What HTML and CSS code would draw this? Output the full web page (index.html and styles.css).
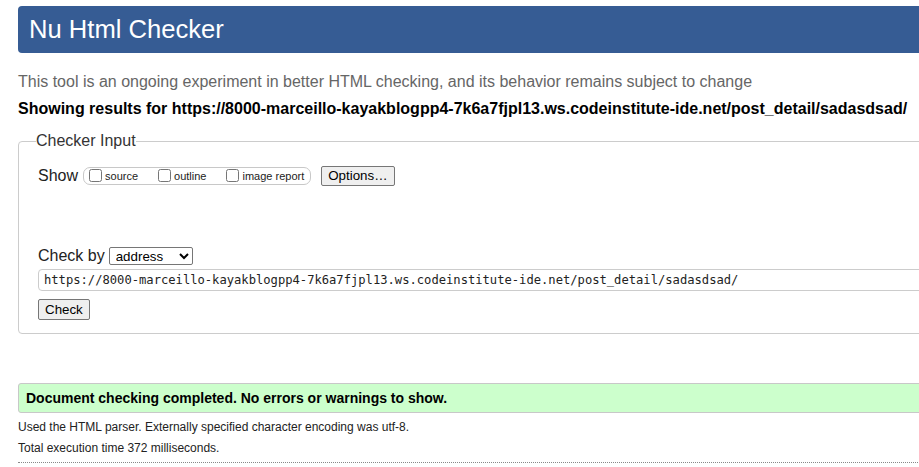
FILE: index.html
```html
<!DOCTYPE html>
<html lang="en">
<head>
<meta charset="utf-8">
<title>Nu Html Checker</title>
<link rel="stylesheet" href="styles.css">
</head>
<body>
<div class="page">
  <h1 class="banner">Nu Html Checker</h1>
  <p class="intro">This tool is an ongoing experiment in better HTML checking, and its behavior remains subject to change</p>
  <p class="results-for">Showing results for https://8000-marceillo-kayakblogpp4-7k6a7fjpl13.ws.codeinstitute-ide.net/post_detail/sadasdsad/</p>

  <fieldset class="checker">
    <legend class="checker-legend">Checker Input</legend>
    <div class="show-row">
      <span class="row-label">Show</span>
      <div class="show-group">
        <label class="show-item"><input type="checkbox" class="cb"><span>source</span></label>
        <label class="show-item"><input type="checkbox" class="cb"><span>outline</span></label>
        <label class="show-item last"><input type="checkbox" class="cb"><span>image report</span></label>
      </div>
      <button class="btn options-btn" type="button">Options…</button>
    </div>
    <div class="checkby-row">
      <span class="row-label">Check by</span>
      <select class="mode-select">
        <option>address</option>
        <option>file upload</option>
        <option>text input</option>
      </select>
    </div>
    <input class="url-input" type="text" value="https://8000-marceillo-kayakblogpp4-7k6a7fjpl13.ws.codeinstitute-ide.net/post_detail/sadasdsad/">
    <div class="submit-row">
      <button class="btn check-btn" type="button">Check</button>
    </div>
  </fieldset>

  <div class="success">Document checking completed. No errors or warnings to show.</div>
  <div class="details">
    <p class="detail-line">Used the HTML parser. Externally specified character encoding was utf-8.</p>
    <p class="detail-line">Total execution time 372 milliseconds.</p>
  </div>
  <div class="dotted-rule"></div>
</div>
</body>
</html>
```

FILE: styles.css
```css
html, body {
  margin: 0;
  padding: 0;
  overflow: hidden;
  background: #fff;
}

body {
  font-family: "Liberation Sans", Arial, sans-serif;
  color: #222;
}

.page {
  width: 1000px;
  padding-left: 18px;
}

.banner {
  margin: 6px 0 0;
  height: 47px;
  line-height: 47px;
  padding-left: 11px;
  font-size: 25.6px;
  font-weight: normal;
  color: #fff;
  background: #365c94;
  border-radius: 4px 0 0 4px;
}

.intro {
  margin: 19px 0 0;
  font-size: 16px;
  line-height: 20px;
  color: #666;
}

.results-for {
  margin: 7px 0 0;
  font-size: 16px;
  line-height: 20px;
  font-weight: bold;
  color: #000;
}

.checker {
  margin: 12px 0 0;
  padding: 15px 0 13px 19px;
  border: 1px solid #ccc;
  border-radius: 4px 0 0 4px;
  min-width: 0;
}

.checker-legend {
  margin-left: -2px;
  padding: 0;
  font-size: 16px;
  line-height: 20px;
  color: #333;
}

.show-row {
  display: flex;
  align-items: center;
  height: 20px;
}

.row-label {
  font-size: 16px;
  line-height: 20px;
  color: #222;
}

.show-group {
  display: flex;
  align-items: center;
  box-sizing: border-box;
  height: 18px;
  margin-left: 5px;
  padding: 0 6px 0 1px;
  border: 1px solid #c8c8c8;
  border-radius: 7px;
}

.show-item {
  display: flex;
  align-items: center;
  margin-right: 16px;
  font-size: 11px;
  line-height: 13px;
  color: #222;
}

.show-item.last {
  margin-right: 0;
}

.cb {
  width: 13px;
  height: 13px;
  margin: 0 3px 2px 4px;
}

.btn {
  font-family: "Liberation Sans", Arial, sans-serif;
  font-size: 13.333px;
  line-height: 16px;
  padding: 1px 6px;
  border: 1px solid #767676;
  border-radius: 2px;
  background: #efefef;
  color: #000;
}

.options-btn {
  margin-left: 10px;
}

.check-btn {
  line-height: 17px;
}

.checkby-row {
  display: flex;
  align-items: center;
  height: 20px;
  margin-top: 60px;
}

.mode-select {
  margin-left: 4px;
  width: 84px;
  height: 18px;
  padding: 0 0 0 2px;
  font-family: "Liberation Sans", Arial, sans-serif;
  font-size: 13.333px;
  border: 1px solid #767676;
  border-radius: 2px;
  background: #fff;
  color: #000;
}

.url-input {
  display: block;
  box-sizing: border-box;
  width: 960px;
  height: 22px;
  margin: 3px 0 0;
  padding: 0 0 0 5px;
  font-family: "DejaVu Sans Mono", "Liberation Mono", monospace;
  font-size: 12.15px;
  color: #222;
  border: 1px solid #ccc;
  border-radius: 4px 0 0 4px;
  outline: none;
}

.submit-row {
  margin-top: 8px;
  display: flex;
}

.success {
  margin-top: 49px;
  padding: 5px 7px;
  line-height: 18px;
  font-size: 14px;
  font-weight: bold;
  color: #000;
  background: #ccffcc;
  border: 1px solid #c8c8c8;
  border-radius: 3px 0 0 3px;
}

.details {
  margin-top: 4px;
}

.detail-line {
  margin: 0;
  font-size: 12px;
  line-height: 21px;
  color: #222;
}

.dotted-rule {
  margin-top: 3px;
  border-top: 1px dotted #888;
}
```
